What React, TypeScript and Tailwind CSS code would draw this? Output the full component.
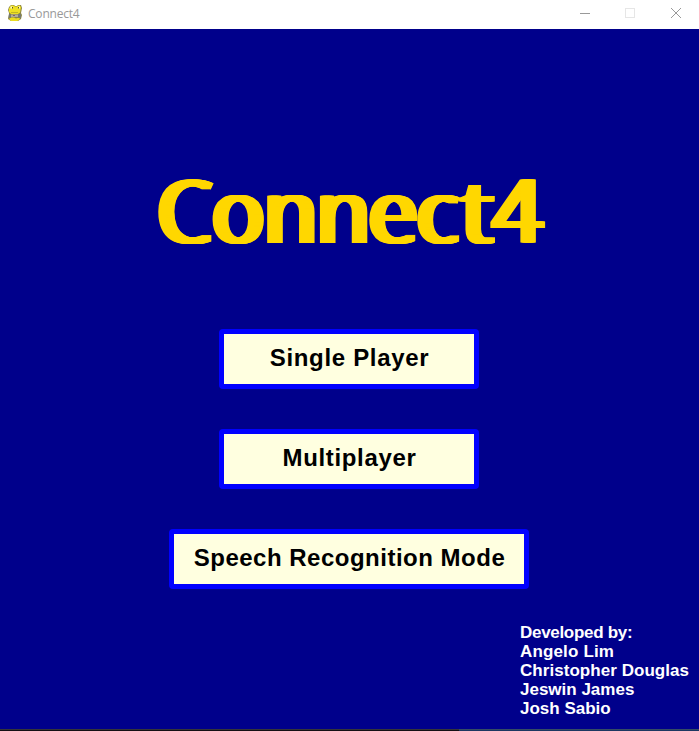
import React from "react";

const titleShadow = "[text-shadow:1px_0_#ffd700,2px_0_#ffd700,3px_0_#ffd700,4px_0_#ffd700,5px_0_#ffd700,6px_0_#ffd700,7px_0_#ffd700,8px_0_#ffd700,8.5px_0_#ffd700]";

function SnakeIcon() {
  return (
    <svg width="16" height="18" viewBox="0 0 16 18" className="shrink-0">
      <path d="M4 0h3l1 1h2l1-1h3l1 3-1 5 1 2-1 4-3 2H4l-3-2 1-5V8L1 5l1-3z" fill="#8c8642" />
      <path d="M4 .5h2.500l1.500 1h2l1.500-1H13l1 2-1 5-2 1.500H4L2 7V3.500z" fill="#eee023" />
      <path d="M4 12.500h3l2 1 3-1 1 1.500-2.500 2H4l-2-2z" fill="#eadb22" />
      <path d="M2 9h2v4H1.500zM11 9h3v4h-3z" fill="#777a70" />
      <path d="M4 9.500h7V12H4z" fill="#b0aa9c" />
      <path d="M3.500 1.500h2v2h-2zM11 1.500h2v2h-2z" fill="#fff9bb" />
      <path d="M5 2h1v1.500H5zM11 2h1v1.500h-1z" fill="#60581d" />
      <path d="M4 7.200h7v.8H4z" fill="#b5aa26" />
      <path d="M6 10h2v1H6z" fill="#806659" />
    </svg>
  );
}

function MenuButton({ label, box, text }: { label: string; box: string; text: string }) {
  return (
    <button className={`flex h-[60px] items-center justify-center rounded-[4px] border-[5px] border-[#0000ff] bg-[#ffffe0] pb-[2px] pl-[1px] ${box}`}>
      <span className={`whitespace-pre text-[24px] leading-[28px] font-bold text-black ${text}`}>{label}</span>
    </button>
  );
}

export default function App() {
  return (
    <div className="flex h-[731px] w-[699px] flex-col overflow-hidden bg-[#00008b] font-['Liberation_Sans',Arial,sans-serif]">
      <header className="flex h-[29px] shrink-0 items-start bg-white pl-[7px]">
        <div className="flex h-[27px] items-center gap-[5px]">
          <SnakeIcon />
          <span className="font-['Open_Sans',sans-serif] text-[12px] leading-[16px] tracking-[-0.2px] text-[#999999]">Connect4</span>
        </div>
        <svg className="ml-auto" width="139" height="27" viewBox="560 0 139 27" shapeRendering="crispEdges">
          <path d="M580 13.500h10" stroke="#999" />
          <path d="M625.500 8.500h9v9h-9z" fill="none" stroke="#e6e6e6" />
          <path d="M671 8l10 10M681 8l-10 10" stroke="#999" shapeRendering="auto" />
        </svg>
      </header>
      <main className="flex min-h-0 flex-1 flex-col">
        <h1 className={`mt-[132px] ml-[153px] h-[98px] whitespace-nowrap font-['Open_Sans',sans-serif] text-[87px] leading-[96px] font-normal text-[#ffd700] ${titleShadow}`}>
          C<span className="tracking-[-0.5px]">on</span><span className="tracking-[-1.5px]">n</span><span className="tracking-[-0.8px]">e</span><span className="tracking-[3.3px]">c</span>t4
        </h1>
        <nav className="mt-[70px] flex w-[698px] flex-col items-center gap-[40px]">
          <MenuButton label="Single Player" box="w-[260px]" text="tracking-[0.67px]" />
          <MenuButton label="Multiplayer" box="w-[260px]" text="tracking-[0.65px]" />
          <MenuButton label="Speech Recognition Mode" box="w-[360px]" text="tracking-[0.5px]" />
        </nav>
        <footer className="mt-[34px] ml-[520px] whitespace-nowrap text-[17px] leading-[19px] font-bold text-white">
          <p className="tracking-[-0.3px]">Developed by:</p>
          <p className="tracking-[0.15px]">Angelo Lim</p>
          <p className="tracking-[0.05px]">Christopher Douglas</p>
          <p>Jeswin James</p>
          <p>Josh Sabio</p>
        </footer>
      </main>
      <div className="flex h-[2px] shrink-0">
        <div className="w-[459px] border-t border-[#343438] bg-[#141014]" />
        <div className="flex-1 border-t border-[#344b63] bg-[#1d3761]" />
      </div>
    </div>
  );
}
